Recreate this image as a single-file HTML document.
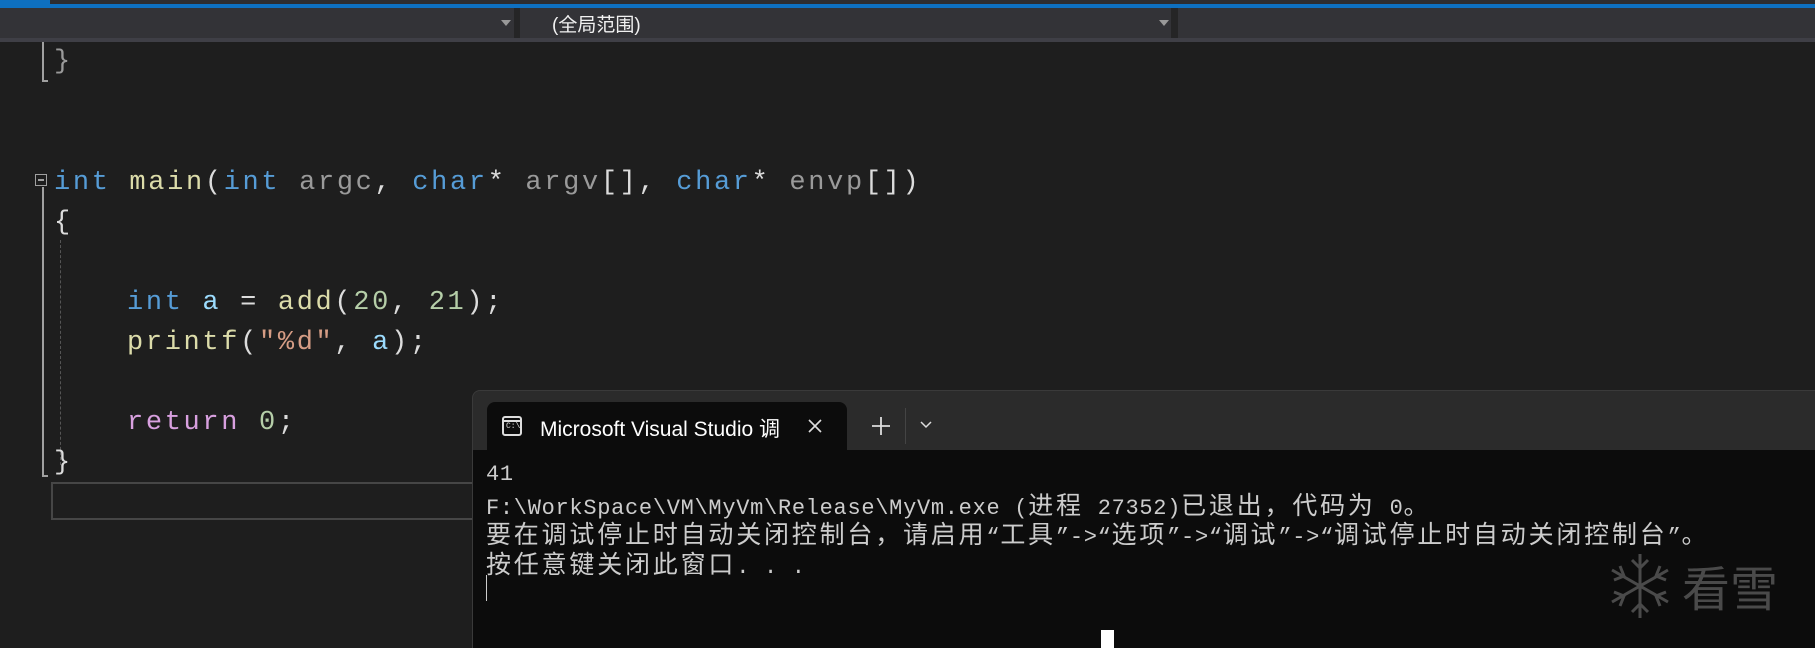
<!DOCTYPE html>
<html><head><meta charset="utf-8"><style>
*{margin:0;padding:0;box-sizing:border-box}
html,body{overflow:hidden}
body{width:1815px;height:648px;overflow:hidden;background:#1e1e1e;position:relative;font-family:"Liberation Sans","Noto Sans CJK SC",sans-serif}
.a{position:absolute}
.code{position:absolute;font-family:"Liberation Mono","Noto Sans CJK SC",monospace;font-size:27px;letter-spacing:2.65px;white-space:pre;color:#dcdcdc;line-height:40px}
.k{color:#569cd6}.f{color:#dcdcaa}.p{color:#9a9a9a}.v{color:#9cdcfe}.n{color:#b5cea8}.s{color:#d69d85}.r{color:#d8a0df}
.con{font-family:"Liberation Mono",monospace;font-size:22px;letter-spacing:0.7px;color:#cccccc;white-space:pre;position:absolute;left:486px;top:460px}
.con div{height:29.5px;line-height:29.5px;overflow:visible}
.c{font-family:"Noto Sans CJK SC",sans-serif;font-size:25px;letter-spacing:2.8px;line-height:29.5px}
</style></head><body>
<div class="a" style="left:0;top:0;width:1815px;height:4px;background:#2d2d30"></div>
<div class="a" style="left:0;top:0;width:50px;height:4px;background:#0e70c0"></div>
<div class="a" style="left:0;top:4px;width:1815px;height:4px;background:#0e70c0"></div>
<div class="a" style="left:0;top:8px;width:1815px;height:34px;background:#252526"></div>
<div class="a" style="left:0;top:8px;width:514px;height:31px;background:#333337"></div>
<div class="a" style="left:520px;top:8px;width:651px;height:31px;background:#333337"></div>
<div class="a" style="left:1178px;top:8px;width:637px;height:31px;background:#333337"></div>
<div class="a" style="left:0;top:38px;width:1815px;height:4px;background:#3f3f46"></div>
<div class="a" style="left:501px;top:20px;border-left:5px solid transparent;border-right:5px solid transparent;border-top:6px solid #999"></div>
<div class="a" style="left:1159px;top:20px;border-left:5px solid transparent;border-right:5px solid transparent;border-top:6px solid #999"></div>
<div class="a" style="left:552px;top:10px;font-size:19px;color:#f1f1f1">(全局范围)</div>

<div class="a" style="left:42px;top:42px;width:2px;height:40px;background:#a0a0a0"></div>
<div class="a" style="left:42px;top:80px;width:6px;height:2px;background:#a0a0a0"></div>
<div class="a" style="left:35px;top:174px;width:12px;height:12px;border:1px solid #a0a0a0"></div>
<div class="a" style="left:38px;top:179px;width:6px;height:2px;background:#a0a0a0"></div>
<div class="a" style="left:42px;top:187px;width:2px;height:290px;background:#a0a0a0"></div>
<div class="a" style="left:42px;top:475px;width:6px;height:2px;background:#a0a0a0"></div>
<div class="a" style="left:60px;top:240px;height:225px;border-left:1px dashed #555"></div>
<div class="a" style="left:51px;top:482px;width:440px;height:38px;border:2px solid #464646;border-right:none"></div>

<div class="code" style="left:54px;top:42px"><span class="p">}</span></div>
<div class="code" style="left:54px;top:163px"><span class="k">int</span> <span class="f">main</span>(<span class="k">int</span> <span class="p">argc</span>, <span class="k">char</span>* <span class="p">argv</span>[], <span class="k">char</span>* <span class="p">envp</span>[])</div>
<div class="code" style="left:54px;top:203px">{</div>
<div class="code" style="left:127px;top:283px"><span class="k">int</span> <span class="v">a</span> = <span class="f">add</span>(<span class="n">20</span>, <span class="n">21</span>);</div>
<div class="code" style="left:127px;top:323px"><span class="f">printf</span>(<span class="s">"%d"</span>, <span class="v">a</span>);</div>
<div class="code" style="left:127px;top:403px"><span class="r">return</span> <span class="n">0</span>;</div>
<div class="code" style="left:54px;top:443px">}</div>

<div class="a" style="left:472px;top:390px;width:1343px;height:258px;background:#2b2b2b;border-radius:8px 0 0 0;border:1px solid #3a3a3a;border-right:none;border-bottom:none"></div>
<div class="a" style="left:473px;top:450px;width:1342px;height:198px;background:#0c0c0c"></div>
<div class="a" style="left:487px;top:402px;width:360px;height:50px;background:#0c0c0c;border-radius:8px 8px 0 0"></div>
<div class="a" style="left:502px;top:416px;width:20px;height:20px;border:2px solid #ddd;border-radius:3px"></div>
<div class="a" style="left:502px;top:420px;width:20px;height:2px;background:#ddd"></div>
<div class="a" style="left:506px;top:422px;font-size:8px;color:#ddd;font-family:'Liberation Mono',monospace">C:\</div>
<div class="a" style="left:540px;top:413px;font-size:21px;color:#fff">Microsoft Visual Studio 调</div>
<div class="a" style="left:780px;top:403px;width:40px;height:46px;background:#0c0c0c"></div>
<svg class="a" style="left:808px;top:419px" width="14" height="14"><path d="M1 1L13 13M13 1L1 13" stroke="#ddd" stroke-width="1.6"/></svg>
<svg class="a" style="left:871px;top:416px" width="20" height="20"><path d="M10 1V19M1 10H19" stroke="#ddd" stroke-width="1.8"/></svg>
<div class="a" style="left:905px;top:408px;width:1px;height:36px;background:#444"></div>
<svg class="a" style="left:920px;top:421px" width="12" height="8"><path d="M1 1L6 6L11 1" stroke="#ddd" stroke-width="1.5" fill="none"/></svg>

<div class="con"><div>41</div><div>F:\WorkSpace\VM\MyVm\Release\MyVm.exe (<span class="c">进程</span> 27352)<span class="c">已退出，代码为</span> 0<span class="c">。</span></div><div><span class="c">要在调试停止时自动关闭控制台，请启用</span>“<span class="c">工具</span>”->“<span class="c">选项</span>”->“<span class="c">调试</span>”->“<span class="c">调试停止时自动关闭控制台</span>”<span class="c">。</span></div><div><span class="c">按任意键关闭此窗口</span>. . .</div></div>
<div class="a" style="left:486px;top:575px;width:1px;height:26px;background:#ccc"></div>
<div class="a" style="left:1101px;top:630px;width:13px;height:18px;background:#fff"></div>

<svg class="a" style="left:1604px;top:550px" width="72" height="72"><g stroke="#4a4a4a" stroke-width="3" fill="none"><path d="M36 4V68M8 20L64 52M8 52L64 20"/><path d="M28 10L36 18L44 10M28 62L36 54L44 62M10 30L20 26L16 16M56 56L52 46L62 42M10 42L20 46L16 56M56 16L52 26L62 30"/></g></svg>
<div class="a" style="left:1682px;top:553px;font-size:48px;color:#4a4a4a;font-family:'Noto Sans CJK SC',sans-serif;line-height:64px">看雪</div>
</body></html>
